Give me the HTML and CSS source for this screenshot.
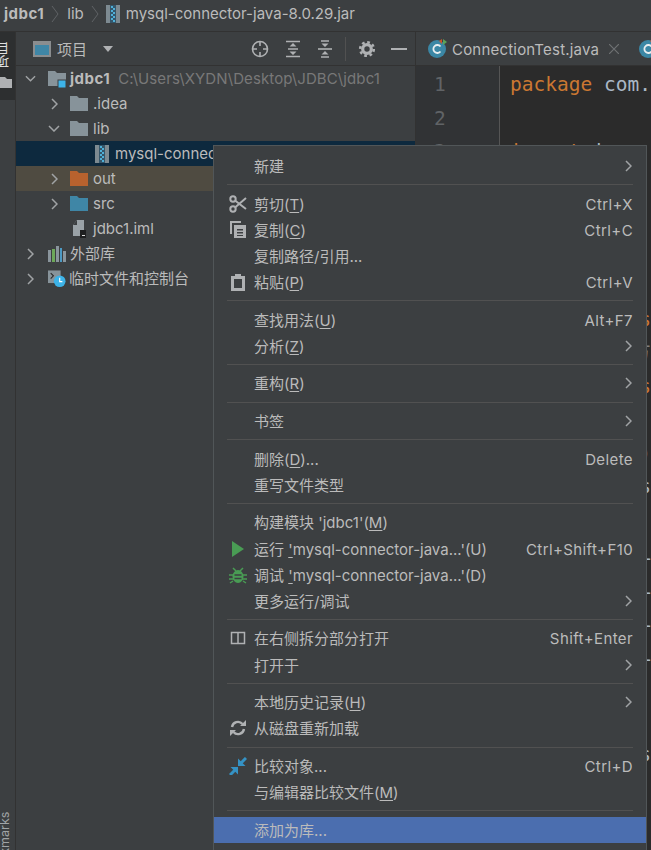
FILE: index.html
```html
<!DOCTYPE html>
<html lang="zh">
<head>
<meta charset="utf-8">
<title>jdbc1</title>
<link rel="stylesheet" href="styles.css">
</head>
<body>
<header class="crumbs">
  <b>jdbc1</b>
  <svg class="sep" viewBox="0 0 8 18"><path d="M1 1l6 8-6 8"/></svg>
  <span>lib</span>
  <svg class="sep" viewBox="0 0 8 18"><path d="M1 1l6 8-6 8"/></svg>
  <svg class="jar" viewBox="0 0 14 18"><rect width="14" height="18" fill="#7d8a91"/><rect x="4" width="6" height="18" fill="#35566a"/><path d="M5 1h2v2H5zM7 3h2v2H7zM5 5h2v2H5zM7 7h2v2H7zM5 9h2v2H5zM7 11h2v2H7zM5 13h2v2H5zM7 15h2v2H7z" fill="#4fb0d8"/></svg>
  <span class="crumb-file">mysql-connector-java-8.0.29.jar</span>
</header>
<div class="main">
  <nav class="stripe">
    <div class="stripe-tab">
      <span class="stripe-label">项目</span>
      <svg class="stripe-folder" viewBox="0 0 12 11"><path d="M0 0h5l2 2h5v9H0z" fill="#afb1b3"/></svg>
    </div>
    <span class="stripe-marks">Bookmarks</span>
  </nav>
  <section class="project">
    <div class="proj-head">
      <svg class="ph-win" viewBox="0 0 18 16"><rect x="1" y="1" width="16" height="14" fill="#3f86a6" stroke="#8a8d8f" stroke-width="2"/><rect x="2" y="2" width="14" height="2" fill="#8a8d8f"/></svg>
      <span class="ph-title">项目</span>
      <svg class="ph-drop" viewBox="0 0 10 6"><path d="M0 0h10L5 6z"/></svg>
      <span class="ph-tools">
        <svg class="t" viewBox="0 0 18 18"><circle cx="9" cy="9" r="7.5"/><path d="M9 1v5M9 12v5M1 9h5M12 9h5"/></svg>
        <svg class="t" viewBox="0 0 16 18"><path d="M1 1.500h14M1 16.500h14M3 9h10"/><path class="f" d="M8 3l3.500 3.500h-7zM8 15l3.500-3.500h-7z"/></svg>
        <svg class="t" viewBox="0 0 16 18"><path d="M1 9h14"/><path class="f" d="M8 7l3.500-3.500h-7zM8 11l3.500 3.500h-7z"/><path d="M4 1h8M4 17h8"/></svg>
        <i class="t-div"></i>
        <svg class="t" viewBox="0 0 18 18"><circle cx="9" cy="9" r="4.300" stroke-width="3.200"/><circle cx="9" cy="9" r="6.800" stroke-width="2.600" stroke-dasharray="2.700 2.640"/></svg>
        <svg class="t t-min" viewBox="0 0 16 18"><path d="M0 9h16" stroke-width="2"/></svg>
      </span>
    </div>
    <ul class="tree">
      <li class="row d0">
        <svg class="arrow" viewBox="0 0 12 7"><path d="M1 1l5 5 5-5"/></svg>
        <svg class="node" viewBox="0 0 18 18"><path d="M0 1h7l2 2h9v13H0z" fill="#87939a"/><rect x="10" y="10" width="8" height="8" fill="#3db3e8" stroke="#3c3f41"/></svg>
        <b class="gap4">jdbc1</b><span class="path">C:\Users\XYDN\Desktop\JDBC\jdbc1</span>
      </li>
      <li class="row d1">
        <svg class="arrow-r" viewBox="0 0 7 12"><path d="M1 1l5 5-5 5"/></svg>
        <svg class="node" viewBox="0 0 18 15"><path d="M0 0h7l2 2h9v13H0z" fill="#87939a"/></svg>
        <span class="gap5">.idea</span>
      </li>
      <li class="row d1">
        <svg class="arrow" viewBox="0 0 12 7"><path d="M1 1l5 5 5-5"/></svg>
        <svg class="node" viewBox="0 0 18 15"><path d="M0 0h7l2 2h9v13H0z" fill="#87939a"/></svg>
        <span class="gap5">lib</span>
      </li>
      <li class="row d2 selected">
        <svg class="jar" viewBox="0 0 14 18"><rect width="14" height="18" fill="#7d8a91"/><rect x="4" width="6" height="18" fill="#35566a"/><path d="M5 1h2v2H5zM7 3h2v2H7zM5 5h2v2H5zM7 7h2v2H7zM5 9h2v2H5zM7 11h2v2H7zM5 13h2v2H5zM7 15h2v2H7z" fill="#4fb0d8"/></svg>
        <span class="gap6">mysql-connector-java-8.0.29.jar</span>
      </li>
      <li class="row d1 excluded">
        <svg class="arrow-r" viewBox="0 0 7 12"><path d="M1 1l5 5-5 5"/></svg>
        <svg class="node" viewBox="0 0 18 15"><path d="M0 0h7l2 2h9v13H0z" fill="#b8622e"/></svg>
        <span class="gap5">out</span>
      </li>
      <li class="row d1">
        <svg class="arrow-r" viewBox="0 0 7 12"><path d="M1 1l5 5-5 5"/></svg>
        <svg class="node" viewBox="0 0 18 15"><path d="M0 0h7l2 2h9v13H0z" fill="#3f86a6"/></svg>
        <span class="gap5">src</span>
      </li>
      <li class="row d3">
        <svg class="node-iml" viewBox="0 0 13 18"><path d="M4 0h7v16H0V5z" fill="#9aa2a7"/><path d="M0 5h4V0z" fill="#3c3f41"/><rect x="7" y="10" width="7" height="8" fill="#1e1f20"/><rect x="9" y="15" width="3" height="1" fill="#ddd"/></svg>
        <span class="gap7">jdbc1.iml</span>
      </li>
      <li class="row d0">
        <svg class="arrow-r" viewBox="0 0 7 12"><path d="M1 1l5 5-5 5"/></svg>
        <svg class="node" viewBox="0 0 18 16"><rect x="0" y="4" width="3" height="12" fill="#8a959c"/><rect x="4" y="3" width="3" height="13" fill="#6da85a"/><rect x="8" y="0" width="3" height="16" fill="#8a959c"/><rect x="12" y="2" width="2" height="14" fill="#4d9ac4"/><rect x="15" y="5" width="3" height="11" fill="#8a959c"/></svg>
        <span class="gap4">外部库</span>
      </li>
      <li class="row d0">
        <svg class="arrow-r" viewBox="0 0 7 12"><path d="M1 1l5 5-5 5"/></svg>
        <svg class="node" viewBox="0 0 20 19"><path d="M0 0h14v14H0z" fill="#87939a"/><path d="M3 3l3 3-3 3" fill="none" stroke="#2b2b2b" stroke-width="1.200"/><circle cx="13" cy="12" r="6.500" fill="#3db3e8"/><path d="M13 8v4.500h3" fill="none" stroke="#fff" stroke-width="1.300"/></svg>
        <span class="gap3">临时文件和控制台</span>
      </li>
    </ul>
  </section>
  <section class="editor">
    <div class="tabs">
      <span class="tab">
        <svg class="tab-ico" viewBox="0 0 19 19"><circle cx="9" cy="10" r="9" fill="#3b87a5"/><path d="M12.500 7.500a4 4 0 1 0 0 5" fill="none" stroke="#e8eef0" stroke-width="1.800"/><path d="M11 2l3-2v5z" fill="#c9572c"/><path d="M15 0l4 3-4 3z" fill="#5aa55a"/></svg>
        <span class="tab-name">ConnectionTest.java</span>
        <svg class="tab-x" viewBox="0 0 10 10"><path d="M0 0l10 10M10 0L0 10"/></svg>
      </span>
      <span class="tab">
        <svg class="tab-ico" viewBox="0 0 19 19"><circle cx="9" cy="10" r="9" fill="#3b87a5"/><path d="M12.500 7.500a4 4 0 1 0 0 5" fill="none" stroke="#e8eef0" stroke-width="1.800"/><path d="M11 2l3-2v5z" fill="#c9572c"/></svg>
      </span>
    </div>
    <div class="edit-body">
      <div class="gutter">
        <div class="ln">1</div>
        <div class="ln">2</div>
        <div class="ln">3</div>
        <i class="fold"></i>
      </div>
<pre class="code"><span class="kw">package</span> com.atguigu.jdbc;

<span class="kw">import</span> java.sql.Connection;
<span class="kw">import</span> java.sql.Driver;
<span class="kw">import</span> java.sql.Statement;
<span class="kw">import</span> java.util.Properties;

<span class="kw">public class</span> ConnectionTest
    <span class="cm">// 测试方法一二三四五</span>
    <span class="kw">public static</span> void main

         f();
        this
 
         URL
         URL
         URL
         URL

          a.b
        this</pre>
    </div>
  </section>
</div>

<div class="menu">
  <div class="item"><span class="ico"></span>新建<svg class="more" viewBox="0 0 7 12"><path d="M1 1l5 5-5 5"/></svg></div>
  <hr>
  <div class="item"><span class="ico"><svg viewBox="0 0 18 18"><circle cx="4" cy="4" r="2.700" stroke-width="2"/><circle cx="4" cy="14" r="2.700" stroke-width="2"/><path stroke-width="2" d="M6 5.500L17 14M6 12.500L17 3"/></svg></span>剪切(<u>T</u>)<kbd>Ctrl+X</kbd></div>
  <div class="item"><span class="ico"><svg viewBox="0 0 18 18"><path class="nf" d="M1 0h11v2H3v11H1z"/><path class="nf" fill-rule="evenodd" d="M5 4h12v13H5zM8 8v1.500h6V8zM8 11v1.500h6V11zM8 14v1h6v-1z"/></svg></span>复制(<u>C</u>)<kbd>Ctrl+C</kbd></div>
  <div class="item"><span class="ico"></span>复制路径/引用...</div>
  <div class="item"><span class="ico"><svg viewBox="0 0 18 18"><path class="nf" fill-rule="evenodd" d="M2 3h4V1h6v2h4v15H2zM5 6v9h8V6z"/></svg></span>粘贴(<u>P</u>)<kbd>Ctrl+V</kbd></div>
  <hr>
  <div class="item"><span class="ico"></span>查找用法(<u>U</u>)<kbd>Alt+F7</kbd></div>
  <div class="item"><span class="ico"></span>分析(<u>Z</u>)<svg class="more" viewBox="0 0 7 12"><path d="M1 1l5 5-5 5"/></svg></div>
  <hr>
  <div class="item"><span class="ico"></span>重构(<u>R</u>)<svg class="more" viewBox="0 0 7 12"><path d="M1 1l5 5-5 5"/></svg></div>
  <hr>
  <div class="item"><span class="ico"></span>书签<svg class="more" viewBox="0 0 7 12"><path d="M1 1l5 5-5 5"/></svg></div>
  <hr>
  <div class="item"><span class="ico"></span>删除(<u>D</u>)...<kbd>Delete</kbd></div>
  <div class="item"><span class="ico"></span>重写文件类型</div>
  <hr>
  <div class="item"><span class="ico"></span>构建模块&nbsp;'jdbc1'(<u>M</u>)</div>
  <div class="item"><span class="ico"><svg viewBox="0 0 18 18"><path class="green" d="M3 1l12 8-12 8z"/></svg></span>运行&nbsp;<u>'</u>mysql-connector-java...'(U)<kbd>Ctrl+Shift+F10</kbd></div>
  <div class="item"><span class="ico"><svg viewBox="0 0 18 18"><ellipse class="green" cx="9" cy="10.500" rx="5.500" ry="6.500"/><path class="gs" d="M4 2l3 3M14 2l-3 3M0 9h18M0 13h18M1 17l3-2M17 17l-3-2"/><path d="M5.500 9h7M5.500 12.500h7" stroke="#3c3f41" stroke-width="1.500"/></svg></span>调试&nbsp;<u>'</u>mysql-connector-java...'(D)</div>
  <div class="item"><span class="ico"></span>更多运行/调试<svg class="more" viewBox="0 0 7 12"><path d="M1 1l5 5-5 5"/></svg></div>
  <hr>
  <div class="item"><span class="ico"><svg viewBox="0 0 18 18"><path d="M2.500 3.500h13v11h-13zM9 3.500v11" stroke-width="1.500"/></svg></span>在右侧拆分部分打开<kbd>Shift+Enter</kbd></div>
  <div class="item"><span class="ico"></span>打开于<svg class="more" viewBox="0 0 7 12"><path d="M1 1l5 5-5 5"/></svg></div>
  <hr>
  <div class="item"><span class="ico"></span>本地历史记录(<u>H</u>)<svg class="more" viewBox="0 0 7 12"><path d="M1 1l5 5-5 5"/></svg></div>
  <div class="item"><span class="ico"><svg viewBox="0 0 18 18"><path stroke-width="2.400" d="M3 8a6 6 0 0 1 10.500-3M15 10a6 6 0 0 1-10.500 3"/><path class="nf" d="M11 7h6V1zM7 11H1v6z"/></svg></span>从磁盘重新加载</div>
  <hr>
  <div class="item"><span class="ico"><svg viewBox="0 0 18 18"><path class="blue" d="M9 9V1.500L16.500 9z"/><path class="bs" d="M12 6l5-5"/><path class="blue" d="M9 10v7.500L1.500 10z"/><path class="bs" d="M6 13l-5 5"/></svg></span>比较对象...<kbd>Ctrl+D</kbd></div>
  <div class="item"><span class="ico"></span>与编辑器比较文件(<u>M</u>)</div>
  <hr>
  <div class="item active"><span class="ico"></span>添加为库...</div>
</div>
</body>
</html>
```
FILE: styles.css
```css
* { box-sizing: border-box; }
html, body { margin: 0; height: 100%; }
body {
  position: relative;
  width: 651px;
  height: 850px;
  overflow: hidden;
  display: flex;
  flex-direction: column;
  background: #3c3f41;
  color: #bbbbbb;
  font: 15px/1.2 "Inter", "Noto Sans CJK SC", sans-serif;
}
svg { display: block; flex: none; }

.crumbs {
  flex: none;
  height: 32px;
  display: flex;
  align-items: center;
  padding: 0 0 3px 4px;
  border-bottom: 1px solid #323232;
  white-space: nowrap;
}
.crumbs .sep { width: 8px; height: 18px; margin: 0 8px 0 7px; fill: none; stroke: #606366; }
.crumbs .jar { width: 14px; height: 18px; margin: 0 6px 0 -1px; }
b { font-weight: 700; letter-spacing: 0.5px; }

.main { flex: 1; display: flex; min-height: 0; }

.stripe {
  flex: none;
  width: 16px;
  display: flex;
  flex-direction: column;
  justify-content: space-between;
  border-right: 1px solid #323232;
  overflow: hidden;
}
.stripe-tab {
  height: 68px;
  background: #2d2f30;
  position: relative;
  display: flex;
  flex-direction: column;
  align-items: flex-start;
  padding-top: 10px;
}
.stripe-label {
  writing-mode: vertical-rl;
  transform: rotate(180deg);
  font-size: 13px;
  line-height: 13px;
  margin-left: -3px;
  color: #e0e0e0;
  height: 26px;
}
.stripe-folder { width: 12px; height: 11px; margin: 9px 0 0 0; }
.stripe-marks {
  writing-mode: vertical-rl;
  transform: rotate(180deg);
  font-size: 12.500px;
  line-height: 13px;
  height: 72px;
  margin-bottom: -34px;
  margin-left: -2px;
  color: #a0a4a6;
  text-align: right;
}

.project { flex: none; width: 400px; border-right: 1px solid #323232; }
.proj-head {
  height: 34px;
  display: flex;
  align-items: center;
  padding: 0 8px 0 17px;
  border-bottom: 1px solid #323232;
}
.ph-win { width: 18px; height: 16px; }
.ph-title { margin-left: 6px; padding-top: 2px; }
.ph-drop { width: 10px; height: 6px; margin-left: 16px; fill: #afb1b3; }
.ph-tools { margin-left: auto; display: flex; align-items: center; }
.t { width: 18px; height: 18px; margin-left: 14.500px; fill: none; stroke: #afb1b3; stroke-width: 1.600; }
.t:first-child { margin-left: 0; }
.t .f { fill: #afb1b3; stroke: none; }
.t-div { width: 1px; height: 24px; background: #515151; margin: 0 12px 0 11px; }
.t-div + .t { margin-left: 0; }
.t-min { width: 16px; margin-left: 15px; }

.tree { list-style: none; margin: 0; padding: 0; }
.row { height: 25px; display: flex; align-items: center; white-space: nowrap; }
.d0 { padding-left: 8px; }
.d1 { padding-left: 32px; }
.d2 { padding-left: 79px; }
.d3 { padding-left: 57px; }
.arrow, .arrow-r { fill: none; stroke: #a0a3a5; stroke-width: 1.500; }
.arrow { width: 12px; height: 7px; margin: 0 11px 0 0; }
.arrow-r { width: 7px; height: 12px; margin: 0 13px 0 3px; }
.d0 .arrow-r { margin-right: 14px; }
.d0 .arrow { margin: 0 12px 0 1px; width: 11px; }
.d1 .arrow-r { margin-right: 12px; }
.d1 .arrow { margin-right: 10px; margin-left: 0; }
.node { width: 18px; height: 18px; }
.d1 .node { height: 15px; }
.node-iml { width: 13px; height: 18px; }
.jar { width: 14px; height: 18px; }
.gap3 { margin-left: 3px; }
.gap4 { margin-left: 4px; }
.gap5 { margin-left: 5px; }
.gap6 { margin-left: 6px; }
.gap7 { margin-left: 7px; }
.path { color: #787878; margin-left: 8px; letter-spacing: 0.1px; }
.selected { background: #0d293e; }
.excluded { background: #4f4b41; }

.editor { flex: 1; min-width: 0; display: flex; flex-direction: column; }
.tabs {
  flex: none;
  height: 34px;
  display: flex;
  align-items: center;
  padding-left: 12px;
  border-bottom: 1px solid #323232;
  overflow: hidden;
  white-space: nowrap;
}
.tab { display: flex; align-items: center; flex: none; }
.tab-ico { width: 19px; height: 19px; margin-right: 5px; }
.tab-name { padding-top: 2px; letter-spacing: 0.2px; }
.tab-x { width: 10px; height: 10px; margin: 0 20px 0 10px; fill: none; stroke: #6e7173; stroke-width: 1.200; }
.edit-body { flex: 1; display: flex; min-height: 0; background: #2b2b2b; }
.gutter {
  flex: none;
  width: 84px;
  background: #313335;
  border-right: 1px solid #555555;
  padding-top: 2px;
  position: relative;
  font: 19.5px/33.5px "DejaVu Sans Mono", monospace;
  color: #606366;
  padding-left: 18px;
}
.fold {
  position: absolute;
  left: 75px;
  top: 79px;
  width: 16px;
  height: 16px;
  background: #313335;
  border: 1px solid #606366;
}
.code {
  margin: 0;
  padding: 2px 0 0 10px;
  flex: 1;
  overflow: hidden;
  font: 19.5px/33.5px "DejaVu Sans Mono", "Noto Sans CJK SC", monospace;
  color: #a9b7c6;
}
.kw { color: #cc7832; }
.cm { color: #808080; }

.menu {
  position: absolute;
  left: 213px;
  top: 145px;
  width: 434px;
  height: 720px;
  padding-top: 7px;
  background: #3c3f41;
  border: 1px solid #515658;
  white-space: nowrap;
}
.item { height: 26.2px; display: flex; align-items: center; padding: 2px 13px 0 0; }
.ico { flex: none; width: 40px; height: 18px; padding-left: 15px; margin-top: -2px; }
.ico svg { width: 18px; height: 18px; fill: none; stroke: #afb1b3; stroke-width: 1.500; }
.ico .nf { fill: #afb1b3; stroke: none; }
.ico .green { fill: #499c54; stroke: none; }
.ico .gs { stroke: #499c54; stroke-width: 1.500; }
.ico .blue { fill: #3592c4; stroke: none; }
.ico .bs { stroke: #3592c4; stroke-width: 3; }
.item kbd { margin-left: auto; font: inherit; letter-spacing: 0.4px; }
.more { width: 7px; height: 12px; margin-left: auto; margin-top: -2px; margin-right: 1px; fill: none; stroke: #a0a3a5; stroke-width: 1.500; }
.item u { text-underline-offset: 2px; }
hr {
  height: 1px;
  margin: 5.2px 13px 5.18px 13px;
  border: 0;
  background: #515151;
}
.active { background: #4b6eaf; }
```
